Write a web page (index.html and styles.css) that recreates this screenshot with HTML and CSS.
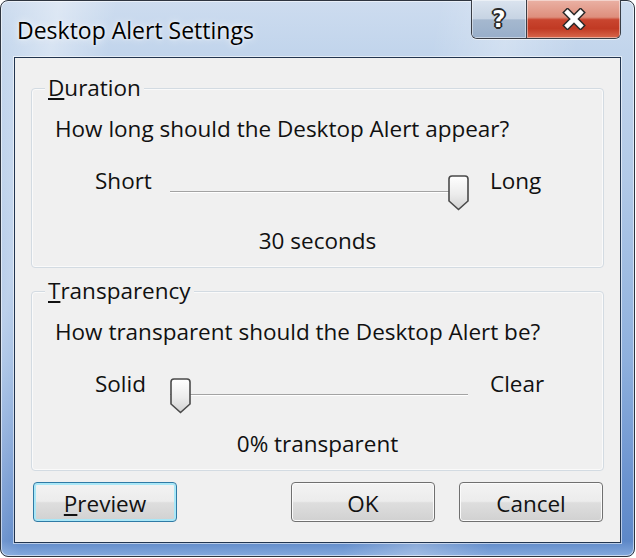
FILE: index.html
```html
<!DOCTYPE html>
<html>
<head>
<meta charset="utf-8">
<link rel="stylesheet" href="styles.css">
</head>
<body>
<div class="window">
  <div class="titlebar">
    <div class="title">Desktop Alert Settings</div>
    <div class="caption-btns">
      <div class="cbtn help"><span class="qmark">?</span></div>
      <div class="cbtn close">
        <svg width="26" height="22" viewBox="0 0 26 22">
          <path d="M6.5 4.5 L19.5 17.5 M19.5 4.5 L6.5 17.5" stroke="#2a2a2a" stroke-width="7.5" stroke-linecap="square" fill="none"/>
          <path d="M6.5 4.5 L19.5 17.5 M19.5 4.5 L6.5 17.5" stroke="#ffffff" stroke-width="4.6" stroke-linecap="square" fill="none"/>
        </svg>
      </div>
    </div>
  </div>
  <div class="client">
    <div class="group first">
      <div class="legend"><u>D</u>uration</div>
      <p class="question">How long should the Desktop Alert appear?</p>
      <div class="slider-row">
        <span class="end-label">Short</span>
        <div class="slider">
          <div class="track"></div>
          <svg class="thumb" style="left: 278px" width="21" height="36" viewBox="0 0 21 36">
            <defs>
              <linearGradient id="tg1" x1="0" y1="0" x2="0" y2="1">
                <stop offset="0" stop-color="#ffffff"/>
                <stop offset="0.55" stop-color="#ececec"/>
                <stop offset="1" stop-color="#d2d2d2"/>
              </linearGradient>
            </defs>
            <path d="M4 1 H17 Q20 1 20 4 V26 L10.5 34.5 L1 26 V4 Q1 1 4 1 Z" fill="url(#tg1)" stroke="#4a4a4a" stroke-width="1.6"/>
          </svg>
        </div>
        <span class="end-label right">Long</span>
      </div>
      <p class="value">30 seconds</p>
    </div>
    <div class="group second">
      <div class="legend"><u>T</u>ransparency</div>
      <p class="question">How transparent should the Desktop Alert be?</p>
      <div class="slider-row">
        <span class="end-label">Solid</span>
        <div class="slider">
          <div class="track"></div>
          <svg class="thumb" style="left: 0px" width="21" height="36" viewBox="0 0 21 36">
            <defs>
              <linearGradient id="tg2" x1="0" y1="0" x2="0" y2="1">
                <stop offset="0" stop-color="#ffffff"/>
                <stop offset="0.55" stop-color="#ececec"/>
                <stop offset="1" stop-color="#d2d2d2"/>
              </linearGradient>
            </defs>
            <path d="M4 1 H17 Q20 1 20 4 V26 L10.5 34.5 L1 26 V4 Q1 1 4 1 Z" fill="url(#tg2)" stroke="#4a4a4a" stroke-width="1.6"/>
          </svg>
        </div>
        <span class="end-label right">Clear</span>
      </div>
      <p class="value">0% transparent</p>
    </div>
    <div class="buttons">
      <button class="btn default"><u>P</u>review</button>
      <span class="spacer"></span>
      <button class="btn">OK</button>
      <button class="btn">Cancel</button>
    </div>
  </div>
</div>
</body>
</html>
```

FILE: styles.css
```css
* { box-sizing: border-box; }

html, body {
  margin: 0;
  padding: 0;
  background: #ffffff;
}

body {
  font-family: "Open Sans", "Noto Sans", "DejaVu Sans", sans-serif;
  font-size: 22.5px;
  color: #111111;
}

.window {
  width: 635px;
  height: 557px;
  border: 1px solid #2e3540;
  border-radius: 8px;
  padding: 0 13px 13px 13px;
  display: flex;
  flex-direction: column;
  background:
    linear-gradient(100deg, rgba(255,255,255,0) 0, rgba(255,255,255,0.35) 8%, rgba(255,255,255,0) 16%, rgba(255,255,255,0) 60%, rgba(255,255,255,0.25) 70%, rgba(255,255,255,0) 80%),
    linear-gradient(180deg, #cddcef 0, #c2d5ec 50px, #b1c9e7 180px, #8eb0dd 360px, #6b93cf 480px, #5d88c8 540px, #8aaee0 557px);
  box-shadow: inset 0 0 0 1px rgba(255,255,255,0.55);
}

.titlebar {
  height: 56px;
  display: flex;
  justify-content: space-between;
  align-items: flex-start;
}

.title {
  margin: 15px 0 0 3px;
  font-size: 23px;
  line-height: 28px;
  color: #000000;
  text-shadow: 0 0 8px rgba(255,255,255,0.9), 0 0 3px rgba(255,255,255,0.9);
}

.caption-btns {
  display: flex;
  margin-top: -1px;
  border: 1px solid #3a3e46;
  border-top: none;
  border-radius: 0 0 6px 6px;
  overflow: hidden;
  height: 39px;
  box-shadow: 0 1px 0 rgba(255,255,255,0.6);
}

.cbtn {
  display: flex;
  align-items: center;
  justify-content: center;
  height: 100%;
  box-shadow: inset 0 0 0 1px rgba(255,255,255,0.45);
}

.help {
  width: 55px;
  border-right: 1px solid #3a3e46;
  background: linear-gradient(180deg, #dbe4ef 0%, #c6d3e3 50%, #a5b8cf 52%, #98aec9 100%);
}

.qmark {
  font-family: "DejaVu Sans", sans-serif;
  font-weight: bold;
  font-size: 23px;
  line-height: 24px;
  color: #ffffff;
  text-shadow:
    1px 0 0 #2a2a2a, -1px 0 0 #2a2a2a, 0 1px 0 #2a2a2a, 0 -1px 0 #2a2a2a,
    1px 1px 0 #2a2a2a, -1px -1px 0 #2a2a2a, 1px -1px 0 #2a2a2a, -1px 1px 0 #2a2a2a,
    2px 0 0 #2a2a2a, -2px 0 0 #2a2a2a, 0 2px 0 #2a2a2a, 0 -2px 0 #2a2a2a;
}

.close {
  width: 93px;
  background: linear-gradient(180deg, #eab1a4 0%, #de8f7d 45%, #c9452f 52%, #c13a24 75%, #d8674c 100%);
}

.client {
  flex: 1;
  border: 1px solid #22354f;
  background: #f0f0f0;
  box-shadow: 0 0 0 1px rgba(255,255,255,0.55);
  display: flex;
  flex-direction: column;
}

.group {
  margin: 0 16px 0 16px;
  border: 1px solid #d3dbe2;
  border-radius: 4px;
  padding: 0 0 13px 23px;
  box-shadow: inset 0 0 0 1px #fafafa;
}

.group.first { margin-top: 30px; }
.group.second { margin-top: 23px; }

.legend {
  width: fit-content;
  margin: -14px 0 0 -10px;
  padding: 0 3px;
  line-height: 26px;
  background: #f0f0f0;
}

.question {
  margin: 15px 0 0 0;
  line-height: 26px;
}

.slider-row {
  margin-top: 26px;
  padding-left: 40px;
  display: flex;
  align-items: flex-start;
}

.end-label {
  width: 75px;
  line-height: 26px;
}

.end-label.right {
  width: auto;
  margin-left: 22px;
}

.slider {
  position: relative;
  width: 298px;
  height: 42px;
}

.track {
  margin-top: 23px;
  height: 2px;
  border-top: 1px solid #a3a3a3;
  border-bottom: 1px solid #ffffff;
}

.thumb {
  position: absolute;
  top: 7px;
}

.value {
  margin: 18px 0 0 0;
  line-height: 26px;
  text-align: center;
  padding-right: 23px;
}

.buttons {
  display: flex;
  margin-top: 11px;
  padding: 0 17px 0 18px;
  gap: 24px;
}

.spacer { flex: 1; }

.btn {
  width: 144px;
  height: 40px;
  font-family: inherit;
  font-size: 22.5px;
  color: #111111;
  border: 1px solid #707070;
  border-radius: 4px;
  background: linear-gradient(180deg, #f3f3f3 0%, #ececec 48%, #dedede 52%, #d1d1d1 100%);
  box-shadow: inset 0 0 0 1px #fbfbfb;
  padding: 2px 0 0 0;
}

.btn.default {
  border-color: #2f7aa5;
  box-shadow: inset 0 0 0 2px #a9e7f7;
}
```
